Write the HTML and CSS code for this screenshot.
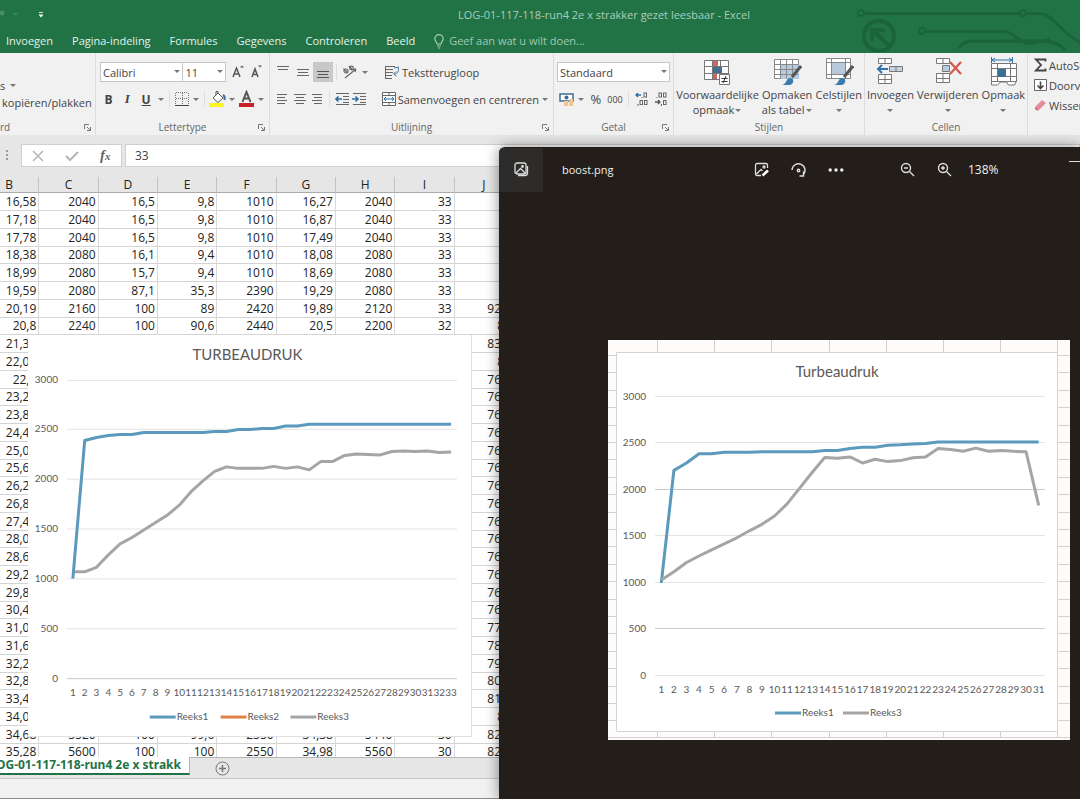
FILE: index.html
```html
<!DOCTYPE html>
<html lang="nl">
<head>
  <meta charset="UTF-8">
  <title>LOG-01-117-118-run4 2e x strakker gezet leesbaar - Excel</title>
  <meta name="viewport" content="width=device-width, initial-scale=1">
  <link rel="stylesheet" href="styles.css">
</head>
<body>
  <div class="excel">
    <header class="top">
      <svg class="circuit" width="226" height="52" viewBox="0 0 226 52" fill="none" stroke="#1b633b" stroke-width="3">
        <circle cx="7" cy="13" r="3" stroke-width="2"/>
        <path d="M11 13.500h155M172 13.500h14c12 0 20 18 40 29"/>
        <circle cx="169" cy="13" r="3" stroke-width="2"/>
        <circle cx="25" cy="36" r="15" stroke-width="4"/>
        <path d="M34 45L19 30M18 41V30h13" stroke-width="4"/>
        <circle cx="68" cy="31" r="3" stroke-width="2"/>
        <path d="M72 31.500h78c10 0 14 12 26 12l20-4"/>
        <path d="M104 48c6-5 8-7 14-7h70c12 0 16 3 24 9"/>
      </svg>
      <div class="titlebar">
        <svg class="quick" width="60" height="28" viewBox="0 0 60 28">
          <circle cx="2" cy="13" r="2.500" fill="#4a8c67"/><path d="M13 13h5l-2.500 3z" fill="#3f8560"/>
          <path d="M39 12.500h4" stroke="#cfe3d7"/><path d="M38.500 14.500h5l-2.500 3z" fill="#fff"/>
        </svg>
        <span class="doc-title">LOG-01-117-118-run4 2e x strakker gezet leesbaar - Excel</span>
      </div>
      <nav class="tabs">
        <a href="#">Invoegen</a>
        <a href="#">Pagina-indeling</a>
        <a href="#">Formules</a>
        <a href="#">Gegevens</a>
        <a href="#">Controleren</a>
        <a href="#">Beeld</a>
        <a href="#" class="tell-me">
          <svg width="10" height="15" viewBox="0 0 10 15" fill="none" stroke="#a9cdb9" stroke-width="1.200"><path d="M3 10c0-2-2.200-2.800-2.200-5.200a4.200 4.200 0 0 1 8.400 0C9.200 7.200 7 8 7 10zM3 12h4M4 14h2"/></svg>
          Geef aan wat u wilt doen...
        </a>
      </nav>
    </header>

    <div class="ribbon">
      <section class="group clipboard">
        <div class="group-body">
          <div class="row paste"><span>s</span><i class="caret"></i></div>
          <button class="text-btn">kopiëren/plakken</button>
        </div>
        <div class="group-label left">rd</div>
        <svg class="launch" width="7" height="7" viewBox="0 0 7 7" fill="none" stroke="#777"><path d="M.5 5V.5H5M3 3l3 3M6.500 3v3.500H3"/></svg>
      </section>

      <section class="group font">
        <div class="group-body">
          <div class="row">
            <label class="pick face"><select aria-label="Lettertype"><option>Calibri</option></select></label>
            <label class="pick size"><select aria-label="Tekengrootte"><option>11</option></select></label>
            <button class="icon" aria-label="Lettertype vergroten"><svg width="16" height="16" viewBox="0 0 16 16" fill="none" stroke="#555" stroke-width="1.500"><path d="M4 13L7.500 4l3.500 9M5.500 10h4"/><path d="M11 3.500l2-2 2 2z" fill="#555" stroke="none"/></svg></button>
            <button class="icon" aria-label="Lettertype verkleinen"><svg width="16" height="16" viewBox="0 0 16 16" fill="none" stroke="#555" stroke-width="1.500"><path d="M4 13l3-8 3 8M5 10.500h4"/><path d="M10 1.500h4l-2 2z" fill="#555" stroke="none"/></svg></button>
          </div>
          <div class="row">
            <button class="icon bold">B</button>
            <button class="icon italic">I</button>
            <button class="icon under">U</button>
            <i class="caret"></i><i class="sep"></i>
            <button class="icon" aria-label="Randen"><svg width="14" height="14" viewBox="0 0 14 14" fill="none" stroke="#777"><path d="M.5 1v12M7.500 1v12M13.500 1v12M1 .5h12M1 6.500h12" stroke-dasharray="1 1"/><path d="M0 13.500h14" stroke="#444"/></svg></button>
            <i class="caret"></i><i class="sep"></i>
            <button class="icon" aria-label="Opvulkleur"><svg width="18" height="18" viewBox="0 0 18 18" fill="none" stroke="#555"><path d="M0 13h15v4H0z" fill="#fbf520" stroke="none"/><path d="M4 8l5-5 5 5-5 4.500zM7 5V1.500h2V4" fill="#fff"/><path d="M14 5c2 1 2 3 1.500 5" stroke="#3c6f9f" stroke-width="2"/></svg></button>
            <i class="caret"></i>
            <button class="icon" aria-label="Tekstkleur"><svg width="16" height="18" viewBox="0 0 16 18" fill="none"><path d="M0 13h15v4H0z" fill="#c9202a"/><path d="M3.500 12l4-10 4 10M5 8.500h5" stroke="#555" stroke-width="2"/></svg></button>
            <i class="caret"></i>
          </div>
        </div>
        <div class="group-label">Lettertype</div>
        <svg class="launch" width="7" height="7" viewBox="0 0 7 7" fill="none" stroke="#777"><path d="M.5 5V.5H5M3 3l3 3M6.500 3v3.500H3"/></svg>
      </section>

      <section class="group align">
        <div class="group-body">
          <div class="row">
            <button class="icon" aria-label="Boven uitlijnen"><svg width="14" height="16" viewBox="0 0 14 16" stroke="#666"><path d="M1 2.500h12M2 5.500h10"/></svg></button>
            <button class="icon" aria-label="Centreren"><svg width="14" height="16" viewBox="0 0 14 16" stroke="#666"><path d="M1 5.500h12M2 8.500h10M1 11.500h12"/></svg></button>
            <button class="icon on" aria-label="Onder uitlijnen"><svg width="14" height="16" viewBox="0 0 14 16" stroke="#555"><path d="M1 7.500h12M2 10.500h10M1 13.500h12"/></svg></button>
            <i class="sep"></i>
            <button class="icon" aria-label="Afdrukstand"><svg width="16" height="16" viewBox="0 0 16 16" fill="none" stroke="#666" stroke-width="1.200"><path d="M3 14L14 5M14 5l-3 .3M14 5l-1 3"/><circle cx="4" cy="7" r="2"/><path d="M1.500 4.500l4 4M7 2l3.500 4"/><circle cx="9.500" cy="4" r="1.800"/></svg></button>
            <i class="caret"></i>
            <button class="text-btn wrap"><svg width="16" height="14" viewBox="0 0 16 14" fill="none" stroke="#666"><path d="M1 1.500h10M1 4.500h8M1 7.500h8M1 10.500h7M1 13.500h7M1.500 1v12"/><path d="M14.500 3c0 5-1 5-4 6M12 6.500L9.500 9l3 2M10 3l5-1" stroke="#456f92"/></svg>Tekstterugloop</button>
          </div>
          <div class="row">
            <button class="icon" aria-label="Links uitlijnen"><svg width="12" height="12" viewBox="0 0 12 12" stroke="#666"><path d="M1 1.500h10M1 4.500h8M1 7.500h10M1 10.500h8"/></svg></button>
            <button class="icon" aria-label="Centreren"><svg width="12" height="12" viewBox="0 0 12 12" stroke="#666"><path d="M0 1.500h12M2 4.500h8M0 7.500h12M2 10.500h8"/></svg></button>
            <button class="icon" aria-label="Rechts uitlijnen"><svg width="12" height="12" viewBox="0 0 12 12" stroke="#666"><path d="M1 1.500h10M3 4.500h8M1 7.500h10M3 10.500h8"/></svg></button>
            <i class="sep"></i>
            <button class="icon" aria-label="Inspringing verkleinen"><svg width="15" height="12" viewBox="0 0 15 12" fill="none" stroke="#666"><path d="M1 .5h13M8 3.500h6M8 6.500h6M8 9.500h6M1 11.500h13"/><path d="M7 6H1M3.500 3.500L1 6l2.500 2.500" stroke="#2f6da3" stroke-width="1.600"/></svg></button>
            <button class="icon" aria-label="Inspringing vergroten"><svg width="15" height="12" viewBox="0 0 15 12" fill="none" stroke="#666"><path d="M1 .5h13M8 3.500h6M8 6.500h6M8 9.500h6M1 11.500h13"/><path d="M0 6h6M3.500 3.500L6 6 3.500 8.500" stroke="#2f6da3" stroke-width="1.600"/></svg></button>
            <button class="text-btn merge"><svg width="14" height="14" viewBox="0 0 14 14" fill="#fff" stroke="#666"><path d="M.5.500h13v13H.5zM.5 3.500h13M.5 10.500h13M7 .5v3M7 10.500v3"/><path d="M2 7h10M4 5L2 7l2 2M10 5l2 2-2 2" fill="none" stroke="#2f6da3"/></svg>Samenvoegen en centreren</button>
            <i class="caret"></i>
          </div>
        </div>
        <div class="group-label">Uitlijning</div>
        <svg class="launch" width="7" height="7" viewBox="0 0 7 7" fill="none" stroke="#777"><path d="M.5 5V.5H5M3 3l3 3M6.500 3v3.500H3"/></svg>
      </section>

      <section class="group number">
        <div class="group-body">
          <div class="row">
            <label class="pick format"><select aria-label="Getalnotatie"><option>Standaard</option></select></label>
          </div>
          <div class="row">
            <button class="icon" aria-label="Financiële notatie"><svg width="15" height="15" viewBox="0 0 15 15" fill="none"><path d="M1 2h13v7H1z" fill="#fff" stroke="#3d6d92" stroke-width="1.500"/><circle cx="7.500" cy="5.500" r="2" fill="#3d6d92"/><path d="M5 9h4v5H5zM10 7h4v7h-4z" fill="#f3c38e"/></svg></button>
            <i class="caret"></i>
            <button class="icon percent">%</button>
            <button class="icon thousands">000</button>
            <i class="sep"></i>
            <button class="icon decimals" aria-label="Meer decimalen"><svg width="13" height="14" viewBox="0 0 13 14" fill="none" stroke="#666"><path d="M6 3H1M3 1L1 3l2 2" stroke="#2f6da3" stroke-width="1.300"/><rect x="9" y="1" width="2.500" height="4"/><rect x="5" y="8.500" width="2.500" height="4"/><rect x="9.500" y="8.500" width="2.500" height="4"/><path d="M7 5v1M3 12v2"/></svg></button>
            <button class="icon decimals" aria-label="Minder decimalen"><svg width="13" height="14" viewBox="0 0 13 14" fill="none" stroke="#666"><path d="M1 10h5M4 8l2 2-2 2" stroke="#555" stroke-width="1.300"/><rect x="5" y="1" width="2.500" height="4"/><rect x="9.500" y="1" width="2.500" height="4"/><rect x="9.500" y="8.500" width="2.500" height="4"/><path d="M3 5v1M7.500 12v2"/></svg></button>
          </div>
        </div>
        <div class="group-label">Getal</div>
        <svg class="launch" width="7" height="7" viewBox="0 0 7 7" fill="none" stroke="#777"><path d="M.5 5V.5H5M3 3l3 3M6.500 3v3.500H3"/></svg>
      </section>

      <section class="group styles">
        <div class="bigs">
          <button class="big"><svg width="30" height="30" viewBox="0 0 30 30" fill="#fff" stroke="#777"><path d="M2.500 3.500h24v19h-24zM2.500 9.500h24M2.500 16.500h24M10.500 3.500v19M18.500 3.500v19"/><path d="M11 4h5v5h-5zM11 17h4v5h-4z" fill="#c8695a" stroke="none"/><path d="M11 10h9v6h-9z" fill="#456f92" stroke="none"/><path d="M17.500 17.500h10v10h-10z"/><path d="M19.500 21.500h6M19.500 24.500h6M24 19l-3 7" stroke="#333"/></svg><span>Voorwaardelijke<br>opmaak<i class="caret"></i></span></button>
          <button class="big"><svg width="30" height="30" viewBox="0 0 30 30" fill="#fff" stroke="#888"><path d="M2.500 2.500h24v19h-24z"/><path d="M9 8h18v14H9z" fill="#b7cbe0" stroke="none"/><path d="M2.500 7.500h24M2.500 12.500h24M2.500 17.500h24M8.500 2.500v19M14.500 2.500v19M20.500 2.500v19" fill="none"/><path d="M29 9l-9 11" stroke="#555" stroke-width="3"/><path d="M10 28c5-1 4-7 8-7 5 0 4 7-1 7z" fill="#3b7cb0" stroke="none"/></svg><span>Opmaken<br>als tabel<i class="caret"></i></span></button>
          <button class="big"><svg width="30" height="30" viewBox="0 0 30 30" fill="#fff" stroke="#888"><path d="M2.500 1.500h24v20h-24zM2.500 5.500h24M2.500 17.500h24M7.500 1.500v20M21.500 1.500v20"/><path d="M8 6h13v11H8z" fill="#bac8dc" stroke="none"/><path d="M29 9l-9 11" stroke="#555" stroke-width="3"/><path d="M10 28c5-1 4-7 8-7 5 0 4 7-1 7z" fill="#3b7cb0" stroke="none"/></svg><span>Celstijlen<br><i class="caret"></i></span></button>
        </div>
        <div class="group-label">Stijlen</div>
      </section>

      <section class="group cells">
        <div class="bigs">
          <button class="big"><svg width="30" height="30" viewBox="0 0 30 30" fill="#fff" stroke="#777"><path d="M3.500 1.500h13v5h-13zM10 1.500v5M3.500 17.500h13v9h-13zM3.500 22.500h13M10 17.500v9"/><path d="M14.500 9.500h13v5h-13zM21 9.500v5" fill="#c5d3de"/><path d="M13 12H3M7 8l-4 4 4 4" fill="none" stroke="#3274ad" stroke-width="2"/></svg><span>Invoegen<br><i class="caret"></i></span></button>
          <button class="big"><svg width="30" height="30" viewBox="0 0 30 30" fill="#fff" stroke="#777"><path d="M3.500 1.500h13v5h-13zM10 1.500v5M3.500 16.500h13v9h-13zM3.500 21.500h13M10 16.500v9"/><path d="M9.500 8.500h7v6h-7z" fill="#bacddd"/><path d="M17 5l11 12M28 5L17 17" stroke="#d0584c" stroke-width="2.200"/></svg><span>Verwijderen<br><i class="caret"></i></span></button>
          <button class="big"><svg width="30" height="30" viewBox="0 0 30 30" fill="#fff" stroke="#777"><path d="M3.500 6.500h25v18h-25zM3.500 11.500h25M3.500 19.500h25M9.500 6.500v18M22.500 6.500v18M3.500 24v4h6l3-3h6l2 3h6l2-4"/><path d="M10 12h8v8h-8z" fill="#3b7098" stroke="none"/><path d="M4 3h20M7 1L4 3l3 2M21 1l3 2-3 2M3.500 0v6M24.500 0v6" fill="none" stroke="#3274ad"/></svg><span>Opmaak<br><i class="caret"></i></span></button>
        </div>
        <div class="group-label">Cellen</div>
      </section>

      <section class="group editing">
        <button class="text-btn"><svg width="13" height="14" viewBox="0 0 13 14" fill="none" stroke="#444" stroke-width="1.800"><path d="M11.500 3.500V1.500H2L7 7l-5 5.500h9.500v-2"/></svg>AutoSom</button>
        <button class="text-btn"><svg width="13" height="14" viewBox="0 0 13 14" fill="#fff" stroke="#666"><path d="M.5 1.500h12v11H.5z"/><path d="M6.500 3.500V10M3.500 7.500l3 3 3-3" fill="none" stroke="#444" stroke-width="1.600"/></svg>Doorvoeren</button>
        <button class="text-btn"><svg width="13" height="14" viewBox="0 0 13 14"><path d="M1 9l7-7 4 3-7 7H3z" fill="#e58a9d"/><path d="M1 9l3.500 3.500H3L1 11z" fill="#c9607a"/></svg>Wissen</button>
      </section>
    </div>

    <div class="formula-bar">
      <span class="grip"></span>
      <div class="fx-box">
        <button aria-label="Annuleren"><svg width="12" height="12" viewBox="0 0 12 12" stroke="#b5b5b5" stroke-width="1.500"><path d="M1 1l10 10M11 1L1 11"/></svg></button>
        <button aria-label="Invoeren"><svg width="14" height="12" viewBox="0 0 14 12" fill="none" stroke="#b5b5b5" stroke-width="2"><path d="M1 6l4 4 8-8"/></svg></button>
        <button class="fx">f<small>x</small></button>
      </div>
      <input class="formula" type="text" value="33" aria-label="Formulebalk">
    </div>

    <main class="sheet">
      <table class="cells-table">
        <thead>
          <tr><th>B</th><th>C</th><th>D</th><th>E</th><th>F</th><th>G</th><th>H</th><th>I</th><th>J</th></tr>
        </thead>
        <tbody id="rows"></tbody>
      </table>
      <svg class="sheet-chart" id="chart-log" width="444" height="402" viewBox="0 0 444 402"></svg>
    </main>

    <div class="sheet-tabs">
      <a href="#" class="sheet-tab"><span>LOG-01-117-118-run4 2e x strakk</span></a>
      <button class="add-sheet" aria-label="Nieuw blad"><svg width="15" height="15" viewBox="0 0 15 15" fill="none" stroke="#777"><circle cx="7.500" cy="7.500" r="6.500"/><path d="M7.500 4v7M4 7.500h7" stroke-width="1.500"/></svg></button>
    </div>
    <footer class="status"></footer>
  </div>

  <div class="viewer">
    <div class="viewer-bar">
      <button class="tile" aria-label="Galerie"><svg width="15" height="15" viewBox="0 0 15 15" fill="none" stroke="#ddd" stroke-width="1.300"><rect x="1" y="1" width="11" height="11" rx="2"/><path d="M2 11l4.500-4.500L11 11M13.500 4v7a2.500 2.500 0 0 1-2.500 2.500H4"/><circle cx="8.500" cy="4.500" r=".8"/></svg></button>
      <span class="file-name">boost.png</span>
      <div class="tools">
        <button aria-label="Bewerken"><svg width="16" height="16" viewBox="0 0 16 16" fill="none" stroke="#ddd" stroke-width="1.300"><path d="M7 13.500H3A1.500 1.500 0 0 1 1.500 12V3A1.500 1.500 0 0 1 3 1.500h9A1.500 1.500 0 0 1 13.500 3v3M2.500 12L7 7.500l1.500 1.500"/><circle cx="10" cy="5" r="1"/><path d="M8.500 13.500l5.500-5" stroke="#fff" stroke-width="2.600"/></svg></button>
        <button aria-label="Draaien"><svg width="16" height="16" viewBox="0 0 16 16" fill="none" stroke="#ddd" stroke-width="1.400"><path d="M1 8a6.500 6.500 0 1 1 11 5M12.500 9.500V14H8.500"/><circle cx="7.500" cy="8.500" r="1.200"/></svg></button>
        <button aria-label="Meer"><svg width="16" height="16" viewBox="0 0 16 16" fill="#eee"><circle cx="2.200" cy="8" r="1.700"/><circle cx="8" cy="8" r="1.700"/><circle cx="13.800" cy="8" r="1.700"/></svg></button>
      </div>
      <div class="zoom">
        <button aria-label="Uitzoomen"><svg width="15" height="15" viewBox="0 0 15 15" fill="none" stroke="#ddd" stroke-width="1.400"><circle cx="6" cy="6" r="4.500"/><path d="M9.500 9.500L14 14M4 6h4"/></svg></button>
        <button aria-label="Inzoomen"><svg width="15" height="15" viewBox="0 0 15 15" fill="none" stroke="#ddd" stroke-width="1.400"><circle cx="6" cy="6" r="4.500"/><path d="M9.500 9.500L14 14M4 6h4M6 4v4"/></svg></button>
        <span>138%</span>
      </div>
      <button class="minimize" aria-label="Minimaliseren"></button>
    </div>
    <div class="photo">
      <svg id="chart-boost" width="462" height="400" viewBox="0 0 462 400"></svg>
    </div>
  </div>

  <script src="charts.js"></script>
</body>
</html>
```
FILE: styles.css
```css
* {
  box-sizing: border-box;
}

body, html {
  height: 100%;
  margin: 0;
  overflow: hidden;
}

body {
  font-family: "Open Sans", "Noto Sans", sans-serif;
  font-size: 11px;
  color: #444;
}

button {
  display: flex;
  align-items: center;
  justify-content: center;
  border: 0;
  padding: 0;
  background: none;
  color: inherit;
  font: inherit;
}

a {
  color: inherit;
  text-decoration: none;
}

svg {
  flex: none;
}

.excel {
  display: flex;
  flex-direction: column;
  height: 100vh;
  background: #e6e6e6;
}

/* green header */
.top {
  position: relative;
  flex: none;
  height: 53px;
  background: #217346;
  color: #e4f1ea;
}

.circuit {
  position: absolute;
  top: 0;
  right: 0;
}

.titlebar {
  display: flex;
  height: 29px;
}

.doc-title {
  flex: 1;
  padding: 0 0 0 68px;
  line-height: 30px;
  text-align: center;
  color: #a9cdb9;
}

.tabs {
  display: flex;
  gap: 19px;
  padding-left: 6px;
  line-height: 24px;
}

.tabs .tell-me {
  display: flex;
  align-items: center;
  gap: 5px;
  color: #a0c8b2;
}

/* ribbon */
.ribbon {
  display: flex;
  flex: none;
  height: 82px;
  overflow: hidden;
  background: #f1f1f1;
}

.group {
  position: relative;
  display: flex;
  flex: none;
  flex-direction: column;
  justify-content: space-between;
  border-right: 1px solid #dcdcdc;
  padding: 8px 3px 0;
}

.clipboard { width: 96px; padding-left: 0; }
.font { width: 174px; }
.align { width: 284px; }
.number { width: 120px; }
.styles { width: 191px; }
.cells { width: 163px; }

.group-body {
  display: flex;
  flex-direction: column;
  gap: 5px;
}

.row {
  display: flex;
  align-items: center;
  height: 22px;
}

.group-label {
  line-height: 15px;
  text-align: center;
  font-size: 10px;
  color: #666;
}

.group-label.left {
  text-align: left;
}

.launch {
  position: absolute;
  right: 4px;
  bottom: 4px;
}

.icon {
  width: 20px;
  height: 20px;
}

.icon.on {
  background: #c8c8c8;
}

.bold { font-weight: 700; font-size: 12px; }
.italic { font-family: "Liberation Serif", serif; font-style: italic; font-weight: 700; font-size: 13px; }
.under { font-weight: 700; font-size: 12px; text-decoration: underline; }
.percent { font-size: 13px; }
.thousands { font-size: 9px; }

.caret {
  display: inline-block;
  flex: none;
  margin: 0 2px;
  border: 3px solid transparent;
  border-top-color: #777;
  border-bottom: 0;
}

.sep {
  width: 1px;
  height: 16px;
  margin: 0 3px;
  background: #dedede;
}

.text-btn {
  gap: 2px;
  white-space: nowrap;
}

.pick {
  position: relative;
  height: 20px;
}

.pick select {
  width: 100%;
  height: 100%;
  border: 1px solid #c6c6c6;
  padding: 0 2px;
  background: #fff;
  color: #444;
  font: inherit;
  appearance: none;
}

.pick::after {
  content: "";
  position: absolute;
  top: 8px;
  right: 3px;
  border: 3px solid transparent;
  border-top-color: #777;
  border-bottom: 0;
}

.face { width: 86px; margin-left: 1px; }
.size { width: 45px; margin: 0 1px 0 -1px; }
.format { width: 113px; }

.clipboard .paste {
  height: 22px;
  margin-top: 13px;
  gap: 3px;
}

.clipboard .text-btn {
  margin: -6px 0 0 2px;
  justify-content: flex-start;
}

.wrap { margin-left: 14px; }
.merge { margin: 0 1px 0 13px; }

.bigs {
  display: flex;
  justify-content: center;
  gap: 3px;
  margin-top: -4px;
}

.big {
  flex-direction: column;
  justify-content: flex-start;
  line-height: 15px;
  white-space: nowrap;
}

.big .caret {
  margin: 0 1px 2px;
}

.editing {
  border: 0;
  padding: 2px 0 0 6px;
  justify-content: flex-start;
}

.editing .text-btn {
  height: 20px;
  justify-content: flex-start;
}

/* formula bar */
.formula-bar {
  display: flex;
  flex: none;
  height: 23px;
  margin: 9px 0 10px;
}

.grip {
  width: 21px;
}

.grip::before {
  content: "";
  display: block;
  width: 2px;
  height: 10px;
  margin: 6px;
  background: repeating-linear-gradient(#999 0 2px, transparent 2px 4px);
}

.fx-box {
  display: flex;
  justify-content: space-around;
  width: 101px;
  margin-right: 3px;
  border: 1px solid #cfcfcf;
  background: #fff;
}

.fx {
  font-family: "Liberation Serif", serif;
  font-style: italic;
  font-weight: 700;
  font-size: 15px;
  color: #666;
}

.fx small {
  font-size: 11px;
}

.formula {
  flex: 1;
  min-width: 0;
  border: 1px solid #cfcfcf;
  padding: 0 9px;
  font: 12px "Open Sans", sans-serif;
  color: #444;
}

/* cells */
.sheet {
  position: relative;
  flex: 1;
  min-height: 0;
  overflow: hidden;
}

.cells-table {
  width: 534px;
  margin-left: -20px;
  border-spacing: 0;
  table-layout: fixed;
  background: #fff;
  font-size: 12px;
  color: #222;
}

.cells-table th {
  height: 16px;
  border-right: 1px solid #c4c4c4;
  border-bottom: 1px solid #ababab;
  padding: 0;
  background: #e6e6e6;
  line-height: 15px;
  font-weight: 400;
}

.cells-table td {
  height: 18px;
  border-right: 1px solid #d9d9d9;
  border-bottom: 1px solid #d4d4d4;
  padding: 0 2px 0 0;
  line-height: 16px;
  text-align: right;
}

.cells-table tr:nth-child(4n) td {
  height: 17px;
}

.sheet-chart {
  position: absolute;
  top: 158px;
  left: 28px;
  border: 1px solid #e0e0e0;
  border-width: 0 1px 1px 0;
  background: #fff;
}

/* charts */
svg text {
  font-family: Lato, sans-serif;
  font-size: 10px;
  fill: #595959;
}

svg .chart-title {
  font-size: 15px;
}

/* bottom */
.sheet-tabs {
  display: flex;
  flex: none;
  height: 21px;
  border-top: 1px solid #b5b5b5;
}

.sheet-tab {
  display: flex;
  justify-content: flex-end;
  width: 190px;
  height: 18px;
  overflow: hidden;
  margin-top: -1px;
  border-right: 1px solid #b5b5b5;
  border-bottom: 2px solid #217346;
  padding-right: 8px;
  background: #fff;
  line-height: 16px;
  white-space: nowrap;
  font-family: "Noto Sans", sans-serif;
  font-size: 12px;
  font-weight: 700;
  color: #217346;
}

.add-sheet {
  width: 64px;
}

.status {
  flex: none;
  height: 21px;
  border-top: 1px solid #c6c6c6;
  border-bottom: 1px solid #8a8a8a;
  background: #f1f1f1;
}

/* photo viewer window lying over the workbook */
.viewer {
  position: absolute;
  top: 147px;
  right: 0;
  bottom: 0;
  left: 499px;
  display: flex;
  flex-direction: column;
  border-top-left-radius: 6px;
  overflow: hidden;
  background: #231e1a;
  box-shadow: 0 0 14px rgba(0, 0, 0, 0.45);
  color: #f0f0f0;
}

.viewer-bar {
  display: flex;
  align-items: center;
  height: 45px;
}

.viewer-bar button {
  width: 37px;
  height: 44px;
}

.viewer-bar .tile {
  width: 44px;
  background: #2e2c2a;
}

.file-name {
  width: 180px;
  padding-left: 19px;
  font-size: 11px;
}

.tools,
.zoom {
  display: flex;
  align-items: center;
}

.tools {
  margin-left: 20px;
}

.zoom {
  flex: 1;
  margin-left: 35px;
}

.zoom span {
  padding-left: 5px;
  font-size: 12px;
}

.viewer-bar .minimize {
  width: 11px;
  height: 1px;
  margin-bottom: 17px;
  background: #ddd;
}

.photo {
  display: flex;
  flex: 1;
  align-items: flex-start;
  justify-content: flex-end;
  padding: 148px 10px 0 0;
}

.photo svg {
  background: #fdfcfb;
}
```
FILE: charts.js
```js
const rows = [
  ["16,58", "2040", "16,5", "9,8", "1010", "16,27", "2040", "33", ""],
  ["17,18", "2040", "16,5", "9,8", "1010", "16,87", "2040", "33", ""],
  ["17,78", "2040", "16,5", "9,8", "1010", "17,49", "2040", "33", ""],
  ["18,38", "2080", "16,1", "9,4", "1010", "18,08", "2080", "33", ""],
  ["18,99", "2080", "15,7", "9,4", "1010", "18,69", "2080", "33", ""],
  ["19,59", "2080", "87,1", "35,3", "2390", "19,29", "2080", "33", ""],
  ["20,19", "2160", "100", "89", "2420", "19,89", "2120", "33", "92,2"],
  ["20,8", "2240", "100", "90,6", "2440", "20,5", "2200", "32", "88"]
];

// rows behind the chart only show their first and last column
const firstCol = ["21,38", "22,08", "22,6", "23,28", "23,88", "24,48", "25,08", "25,68", "26,28", "26,88", "27,48",
  "28,08", "28,68", "29,28", "29,88", "30,48", "31,08", "31,68", "32,28", "32,88", "33,48", "34,08"];
const lastCol = ["83,1", "80", "76,9", "76,1", "76,1", "76,1", "76,1", "76,1", "76,1", "76,1", "76,1",
  "76,1", "76,1", "76,1", "76,1", "76,1", "77,3", "78,4", "79,2", "80,4", "81,2", "82"];
firstCol.forEach((b, i) => rows.push([b, "", "", "", "", "", "", "", lastCol[i]]));

rows.push(["34,68", "5520", "100", "99,6", "2550", "34,38", "5440", "30", "82,4"]);
rows.push(["35,28", "5600", "100", "100", "2550", "34,98", "5560", "30", "82,4"]);

document.getElementById("rows").innerHTML = rows
  .map(r => "<tr>" + r.map(c => `<td>${c}</td>`).join("") + "</tr>")
  .join("");

function drawChart(id, o) {
  const step = (o.right - o.left) / o.count;
  const x = i => (o.left + step * (i + 0.5)).toFixed(1);
  const y = v => (o.zero - (o.zero - o.top) * v / 3000).toFixed(1);
  let out = o.back || "";

  for (let v = 0; v <= 3000; v += 500) {
    const line = Math.floor(y(v)) + 0.5;
    out += `<path d="M${o.left} ${line}H${o.right}" stroke="${o.dark.includes(v) ? "#c9c9c9" : "#e3e3e3"}"/>`;
    out += `<text x="${o.labels}" y="${line + 3}" text-anchor="end">${v}</text>`;
  }
  for (let i = 0; i < o.count; i++) {
    out += `<text x="${x(i)}" y="${o.zero + 18}" text-anchor="middle">${i + 1}</text>`;
  }
  o.series.forEach(s => {
    const pts = s.data.map((v, i) => x(i) + "," + y(v)).join(" ");
    out += `<polyline points="${pts}" fill="none" stroke="${s.color}" stroke-width="3" stroke-linejoin="round"/>`;
  });
  o.legend.forEach(l => {
    out += `<path d="M${l.x} ${o.legendY}h26" stroke="${l.color}" stroke-width="3"/>`;
    out += `<text x="${l.x + 27}" y="${o.legendY + 3}">${l.name}</text>`;
  });
  out += `<text class="chart-title" x="${o.titleX}" y="${o.titleY}" text-anchor="middle">${o.title}</text>`;
  document.getElementById(id).innerHTML = out;
}

const blue = "#5b9abd";
const orange = "#dd8344";
const grey = "#a5a5a5";

drawChart("chart-log", {
  title: "TURBEAUDRUK", titleX: 220, titleY: 25,
  left: 39, right: 430, top: 45, zero: 344, labels: 30, count: 33, dark: [0], 
  series: [
    { color: grey, data: [1070, 1070, 1115, 1240, 1350, 1415, 1490, 1565, 1640, 1740, 1875, 1985, 2080, 2125, 2110, 2110, 2110,
      2130, 2110, 2125, 2095, 2180, 2180, 2240, 2255, 2250, 2245, 2280, 2285, 2280, 2285, 2270, 2275] },
    { color: blue, data: [1000, 2390, 2420, 2440, 2450, 2450, 2470, 2470, 2470, 2470, 2470, 2470, 2480, 2480, 2500, 2500, 2510,
      2510, 2535, 2535, 2555, 2555, 2555, 2555, 2555, 2555, 2555, 2555, 2555, 2555, 2555, 2555, 2555] }
  ],
  legendY: 383,
  legend: [{ x: 122, color: blue, name: "Reeks1" }, { x: 193, color: orange, name: "Reeks2" }, { x: 263, color: grey, name: "Reeks3" }]
});

// cell borders that stick out around the copied chart
let edge = "";
for (let i = 0; i < 22; i++) {
  const ty = Math.round(15 + i * 17.4) + 0.5;
  edge += `M0 ${ty}H8M450 ${ty}H462`;
}
for (let i = 0; i < 8; i++) {
  const tx = Math.round(49 + i * 57.2) + 0.5;
  edge += `M${tx} 0V12M${tx} 392V397`;
}

drawChart("chart-boost", {
  title: "Turbeaudruk", titleX: 229, titleY: 37,
  left: 47, right: 437, top: 56, zero: 335, labels: 38, count: 31, dark: [500, 2000],
  back: `<path d="${edge}M0 397.5H462" stroke="#d4d0d0"/><path d="M8.500 12.500h441v379H8.500z" fill="#fff" stroke="#d4d4d4"/>`,
  series: [
    { color: blue, data: [990, 2200, 2280, 2380, 2380, 2395, 2395, 2395, 2400, 2400, 2400, 2400, 2400, 2415, 2415, 2435, 2450,
      2450, 2470, 2475, 2485, 2490, 2505, 2505, 2505, 2505, 2505, 2505, 2505, 2505, 2505] },
    { color: grey, data: [1020, 1110, 1210, 1280, 1345, 1410, 1475, 1550, 1620, 1710, 1840, 2010, 2180, 2340, 2330, 2345, 2280,
      2320, 2295, 2305, 2335, 2345, 2435, 2425, 2405, 2440, 2405, 2415, 2405, 2400, 1825] }
  ],
  legendY: 373,
  legend: [{ x: 167, color: blue, name: "Reeks1" }, { x: 235, color: grey, name: "Reeks3" }]
});
```
